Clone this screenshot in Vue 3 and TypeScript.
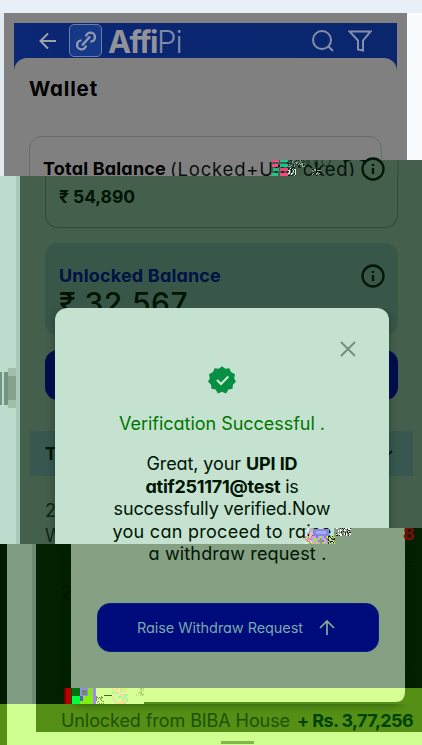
<script setup lang="ts">
interface Cell { x: number; y: number; w: number; h: number; c: string }

// Spreads a line of text over a fixed width by adjusting its tracking.
const vFit = {
  mounted(el: HTMLElement, binding: { value: number }) {
    const count = (el.textContent ?? '').trim().length
    const width = el.getBoundingClientRect().width
    el.style.letterSpacing = `${(binding.value - width) / count}px`
  },
}

function noise(x0: number, y0: number, cols: number, rows: number, size: number, palette: string[], seed: number): Cell[] {
  const out: Cell[] = []
  let s = seed
  for (let r = 0; r < rows; r++) {
    for (let c = 0; c < cols; c++) {
      s = (s * 1103515245 + 12345) % 2147483648
      const color = palette[Math.floor((s / 2147483648) * palette.length)]
      if (color) out.push({ x: x0 + c * size, y: y0 + r * size, w: size, h: size, c: color })
    }
  }
  return out
}

const seamOne: Cell[] = [
  { x: 0, y: 0, w: 7, h: 2, c: '#ff4685' }, { x: 8, y: 0, w: 8, h: 2, c: '#19c98d' },
  { x: 0, y: 4, w: 6, h: 3, c: '#ff4685' }, { x: 8, y: 4, w: 8, h: 3, c: '#14c88a' },
  { x: 1, y: 8, w: 6, h: 3, c: '#17bd83' }, { x: 8, y: 8, w: 8, h: 3, c: '#f83e7b' },
  { x: 0, y: 13, w: 6, h: 3, c: '#20c68c' }, { x: 8, y: 13, w: 8, h: 3, c: '#fb4882' },
  ...noise(16, 0, 17, 7, 1, ['#12221a', '#90a797', '', '#405b49'], 17),
  ...noise(16, 8, 8, 8, 1, ['#e1eee4', '#0e1f15', '#678671', ''], 31),
  { x: 24, y: 8, w: 7, h: 8, c: '#3f5b48' },
  ...noise(40, 9, 9, 6, 1, ['#06130a', '', '#9cad9f'], 55),
]
const seamTwo: Cell[] = [
  ...noise(0, 0, 4, 4, 2, ['#ffa4bd', '#dff2df', '#79cbb0', ''], 9),
  ...noise(0, 8, 8, 8, 1, ['#ff93a3', '#ff619e', '#d9f0d1', '#91ce89'], 12),
  { x: 8, y: 1, w: 16, h: 7, c: '#8488d8' }, { x: 11, y: 3, w: 10, h: 3, c: '#a8a8ff' },
  ...noise(7, 8, 8, 4, 2, ['#9fe73d', '#8172e2', '#8f9f6d', '#d39aff'], 64),
  ...noise(22, 8, 8, 8, 1, ['#e6ef15', '#182300', '#7b9b4d', ''], 88),
  ...noise(31, 0, 15, 8, 1, ['#fff', '#172315', '#7b9477', ''], 43),
]
const seamThree: Cell[] = [
  { x: 0, y: 0, w: 2, h: 16, c: '#760000' }, { x: 2, y: 0, w: 5, h: 16, c: '#b80000' },
  { x: 7, y: 0, w: 1, h: 16, c: '#004a00' }, { x: 8, y: 0, w: 8, h: 8, c: '#00720c' }, { x: 8, y: 8, w: 8, h: 8, c: '#00ff3d' },
  { x: 16, y: 0, w: 8, h: 8, c: '#9888ef' }, { x: 18, y: 2, w: 5, h: 5, c: '#668f55' },
  { x: 24, y: 0, w: 6, h: 8, c: '#84e51c' }, { x: 29, y: 0, w: 3, h: 16, c: '#a785ff' },
  { x: 16, y: 8, w: 13, h: 8, c: '#82f00d' }, { x: 16, y: 8, w: 3, h: 5, c: '#6552e3' },
  ...noise(32, 8, 8, 8, 1, ['#d6ff95', '#7b9c44', '#d6ff95'], 77),
  { x: 40, y: 7, w: 8, h: 1, c: '#456b19' },
  ...noise(48, 0, 8, 8, 2, ['#d6ff95', '#fbd89c', '#a6f6a4', '#cbff6d', '#f5ee9d', '#c8ffa5'], 24),
  ...noise(72, 0, 8, 8, 1, ['#a7cf6b', '', ''], 48),
]
const message = [{ text: 'successfully verified.Now', width: 217 }, { text: 'you can proceed to raise', width: 219 }]
</script>

<template>
  <main class="screen">
    <div class="top-strip"></div>

    <section class="band-top">
      <div class="page">
        <header class="appbar">
          <svg class="back" viewBox="0 0 18 18"><path d="M17 9H2M9 1.5 1.5 9 9 16.5" /></svg>
          <div class="logo">
            <svg viewBox="0 0 22 22"><path d="M11 6.500a4.500 4.500 0 1 1 4.500 5.200M11 15.500a4.500 4.500 0 1 1-4.500-5.200M7 15.500l8-9" /></svg>
          </div>
          <div class="brand"><b v-fit="49">Affi</b><span v-fit="25">Pi</span></div>
          <svg class="search" viewBox="0 0 22 22"><circle cx="10" cy="10" r="9" /><path d="m16.5 16.5 4.5 4.5" /></svg>
          <svg class="filter" viewBox="0 0 24 22"><path d="M1.500 1.500h21L15 10.500v10l-5-1v-9z" /></svg>
        </header>
        <div class="sheet">
          <h1><span v-fit="69">Wallet</span></h1>
          <div class="total-card"></div>
        </div>
      </div>
    </section>

    <section class="band-mid">
      <div class="rail"><i></i><i></i><i></i></div>
      <div class="content">
        <div class="total-end"><b v-fit="76">₹ 54,890</b></div>
        <div class="unlocked">
          <div class="unlocked-copy">
            <b v-fit="162">Unlocked Balance</b>
            <div class="amount"><span v-fit="129">₹ 32,567</span></div>
          </div>
          <svg class="info" viewBox="0 0 24 24"><circle cx="12" cy="12" r="10.5" /><path d="M12 11v6M12 7v2" /></svg>
        </div>
        <div class="action"></div>
        <div class="table-head"><b>T</b><svg viewBox="0 0 12 8"><path d="m1 1 5 5 5-5" /></svg></div>
        <div class="entry">2<br />W</div>
      </div>
    </section>

    <section class="band-low">
      <div class="entry-low">2</div>
    </section>

    <footer class="band-foot">
      <div class="foot-line"><span v-fit="229">Unlocked from BIBA House</span><b v-fit="116">+ Rs. 3,77,256</b></div>
      <div class="home"></div>
    </footer>

    <div class="seam seam-one">
      <svg width="150" height="16">
        <rect width="150" height="16" fill="#445f4c" /><path d="M126 0v16" stroke="#304c39" />
        <path d="M72 2q12-8 22 0" stroke="#07170c" stroke-width="3" fill="none" />
        <path d="M35 0v5h2V0m6 0v6h2V0m5 0c0 8 8 8 8 0" stroke="#17291d" fill="none" />
      </svg>
    </div>
    <div class="total-label"><b v-fit="123">Total Balance</b><span v-fit="186">(Locked+Unlocked)</span></div>
    <div class="seam seam-one">
      <svg width="60" height="16">
        <rect v-for="(p, i) in seamOne" :key="i" :x="p.x" :y="p.y" :width="p.w" :height="p.h" :fill="p.c" />
      </svg>
    </div>
    <svg class="info info-top" viewBox="0 0 24 24"><circle cx="12" cy="12" r="10.5" /><path d="M12 11v6M12 7v2" /></svg>

    <div class="modal modal-upper">
      <svg class="close" viewBox="0 0 16 16"><path d="m1 1 14 14M15 1 1 15" /></svg>
      <svg class="verified" viewBox="0 0 30 30">
        <path d="M15 1.200 18.200 3.800 22.400 3.200 24 7 28 9.200 27.200 13.200 29 16.700 26 19.500 25.500 23.800 21.500 24.600 19 28.400 15 26.800 11 28.400 8.500 24.600 4.500 23.800 4 19.500 1 16.700 2.800 13.200 2 9.200 6 7 7.600 3.200 11.800 3.800Z" />
        <path class="tick" d="m10 15 4 4 7.300-7.500" />
      </svg>
      <h2><span v-fit="206">Verification Successful .</span></h2>
      <div class="message">
        <p><span v-fit="151">Great, your <b>UPI ID</b></span></p>
        <p><span v-fit="153"><b>atif251171@test</b> is</span></p>
        <p v-for="line in message" :key="line.text"><span v-fit="line.width">{{ line.text }}</span></p>
      </div>
    </div>
    <div class="modal modal-lower">
      <p><span v-fit="178">a withdraw request .</span></p>
      <button>
        <span v-fit="166">Raise Withdraw Request</span>
        <svg viewBox="0 0 16 16"><path d="M8 15V1M1 8l7-7 7 7" /></svg>
      </button>
    </div>

    <div class="seam seam-two">
      <svg width="117" height="16">
        <rect x="29" width="71" height="16" fill="#85a083" /><rect x="100" width="17" height="16" fill="#032000" />
        <rect v-for="(p, i) in seamTwo" :key="i" :x="p.x" :y="p.y" :width="p.w" :height="p.h" :fill="p.c" />
      </svg>
      <b>8</b>
    </div>
    <div class="seam seam-three">
      <svg width="358" height="16">
        <rect x="8" width="350" height="16" fill="#568f16" />
        <path d="M8 0H341V4Q341 14 331 14H80V16H8Z" fill="#d6ff95" />
        <rect v-for="(p, i) in seamThree" :key="i" :x="p.x" :y="p.y" :width="p.w" :height="p.h" :fill="p.c" />
      </svg>
    </div>
  </main>
</template>

<style>
body { margin: 0; }
</style>

<style scoped>
* { box-sizing: border-box; }
.screen { position: relative; width: 422px; height: 745px; overflow: hidden; font-family: Inter, "Open Sans", sans-serif; font-feature-settings: "cv11" 1; color: #001404; font-size: 18px; }
.screen span, .screen b { white-space: nowrap; }
svg { display: block; fill: none; flex: none; }
h1, h2, p { margin: 0; }
b { font-weight: 700; }
.top-strip { height: 13px; background: #e9eff6; }
.band-top { height: 163px; background: linear-gradient(90deg, #e2eaf1 4px, #fafbff 4px); padding-left: 4px; }
.page { width: 403px; height: 163px; background: #808080; padding: 10px 10px 0; overflow: hidden; }
.appbar { height: 47px; padding: 0 25px 12px; display: flex; align-items: center; background: linear-gradient(90deg, #0b2775, #0a266d); color: #949aad; }
.back { width: 18px; height: 18px; stroke: #9ca1ae; stroke-width: 2; }
.logo { width: 33px; height: 33px; margin: 0 6px 0 12px; border: 1px solid #6e7da5; border-radius: 5px; background: #163987; display: grid; place-items: center; }
.logo svg { width: 22px; height: 22px; stroke: #969caf; stroke-width: 2.3; }
.brand { display: flex; align-items: center; width: 203px; font-size: 31px; line-height: 35px; padding-top: 2px; }
.brand b { color: #929398; }
.brand span { font-weight: 300; color: #7f8aa8; }
.search { width: 22px; height: 22px; margin-left: 1px; stroke: #858eaa; stroke-width: 2; }
.filter { width: 24px; height: 22px; margin-left: 14px; stroke: #858eaa; stroke-width: 2; }
.sheet { height: 130px; margin-top: -12px; border-radius: 13px 13px 0 0; background: #808080; padding: 16px 15px 0; }
h1 { font-size: 20.5px; line-height: 30px; font-weight: 700; color: #000; }
.total-card { height: 60px; margin-top: 32px; border: 1px solid #686c69; border-radius: 13px 13px 0 0; }
.total-label { position: absolute; left: 43px; top: 158px; height: 18px; line-height: 22px; overflow: hidden; color: #06100a; font-size: 18.5px; width: 315px; display: flex; gap: 4px; }
.total-label b { color: #000; font-size: 18px; }
.info { width: 24px; height: 24px; stroke: #021506; stroke-width: 2.3; }
.info-top { position: absolute; left: 360.5px; top: 157px; }

.band-mid { height: 368px; display: flex; background: #445f4c; }
.rail { width: 20px; height: 368px; background: #bddccd; border-right: 4px solid #a8cbb9; padding-top: 192px; display: flex; align-items: flex-start; gap: 2px; }
.rail i { width: 2px; height: 33px; margin-top: 4px; background: #73947f; }
.rail i:nth-child(2) { width: 4px; }
.rail i:nth-child(3) { width: 8px; height: 40px; margin: 0; margin-left: -2px; background: linear-gradient(#a1beab 8px, #88a290 8px 32px, #a1beab 32px); }
.content { width: 402px; overflow: hidden; }
.total-end { width: 353px; height: 52px; margin-left: 25px; padding: 8px 13px; border: 1px solid #304c39; border-top: 0; border-radius: 0 0 13px 13px; line-height: 26px; font-size: 17.5px; }
.unlocked { width: 353px; height: 92px; margin: 15px 0 0 25px; padding: 20px 13.5px 0 14px; display: flex; justify-content: space-between; border-radius: 13px; background: #385749; }
.unlocked-copy { line-height: 26px; }
.unlocked-copy > b { color: #001144; display: inline-block; }
.unlocked .info { margin: 1px 0 0; }
.amount { font-size: 30px; line-height: 34px; margin-top: -3px; font-weight: 500; }
.action { width: 353px; height: 50px; margin: 15px 0 0 25px; border-radius: 13px; background: #000c4e; }
.table-head { width: 383px; height: 45px; margin: 31px 0 0 10px; padding: 0 20px 0 15px; display: flex; align-items: center; justify-content: space-between; background: #375750; }
.table-head svg { width: 12px; height: 8px; stroke: #021b08; stroke-width: 2; }
.entry { margin: 22px 0 0 25px; line-height: 25px; color: #0b2814; }

.band-low { height: 160px; padding: 18px 8px 0 61px; background: linear-gradient(90deg, #031a00 7px, #809d83 7px 32px, #6d8b72 32px 36px, #032000 36px); }
.entry-low { height: 106px; border: solid #021700; border-width: 1px 0; padding-top: 17px; line-height: 25px; color: #021200; }
.band-foot { height: 41px; background: linear-gradient(90deg, #568f16 7px, #d0ff91 7px 36px, transparent 36px), linear-gradient(#568f16 28px, #d0ff91 28px); padding: 5px 9px 0 61px; }
.foot-line { display: flex; justify-content: space-between; height: 24px; line-height: 24px; color: #1c5200; }
.foot-line b { color: #004300; }
.home { width: 33px; height: 3px; margin: 8px 0 0 160px; background: #80b64c; }

.modal { position: absolute; width: 334px; overflow: hidden; }
.modal-upper { left: 55px; top: 308px; height: 236px; border-radius: 12px 12px 0 0; background: #c4e2cf; padding-top: 33px; clip-path: inset(0 -10px 0 -10px); box-shadow: 0 2px 8px #0b251470; }
.close { width: 16px; height: 16px; margin-left: 285px; stroke: #758e7d; stroke-width: 1.8; }
.verified { width: 30px; height: 30px; margin: 8px auto 0 152px; fill: #079044; }
.tick { fill: none; stroke: #d4edda; stroke-width: 2; }
h2 { margin-top: 16px; font-size: 18px; line-height: 26px; font-weight: 400; color: #007600; text-align: center; }
.message { margin-top: 16px; text-align: center; }
.message p { height: 22.5px; line-height: 22.5px; }
.modal-lower { left: 71px; top: 544px; height: 158px; border-radius: 0 0 13px 13px; background: #85a083; clip-path: inset(0 -12px -14px -12px); box-shadow: 0 3px 9px #0529007a; text-align: center; }
.modal-lower p { height: 20px; line-height: 20px; margin-right: 1px; }
button { width: 282px; height: 49px; margin: 39px 26px 0; padding: 0 43px 0 39px; display: flex; align-items: center; justify-content: space-between; border: 1px solid #00217f; border-radius: 13px; background: #000b7b; color: #78a8ae; font: inherit; font-feature-settings: inherit; font-size: 14.5px; }
button svg { width: 16px; height: 16px; stroke: #86ad9c; stroke-width: 1.7; }

.seam { position: absolute; height: 16px; overflow: hidden; }
.seam-one { left: 272px; top: 160px; }
.seam-two { left: 305px; top: 528px; width: 117px; }
.seam-two b { position: absolute; left: 98px; top: -4px; line-height: 20px; color: #810c04; }
.seam-three { left: 64px; top: 688px; }
</style>
